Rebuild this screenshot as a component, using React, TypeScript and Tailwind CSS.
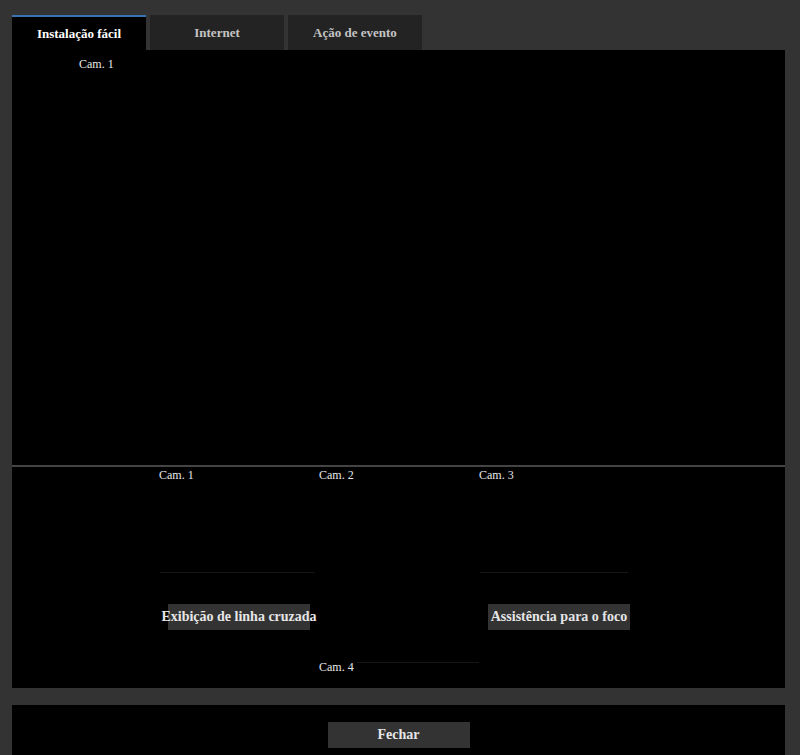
import React from "react";

const serif = { fontFamily: '"Liberation Serif", "Times New Roman", serif' };

const tabs = [
  { label: "Instalação fácil", active: true },
  { label: "Internet", active: false },
  { label: "Ação de evento", active: false },
];

function CamCell({ label, button, line }: { label: string; button?: string; line?: string }) {
  return (
    <div className="flex h-[193px] w-40 flex-col">
      <div className="h-[14px] pt-px text-xs leading-[14px] text-[#e8e8e8]">{label}</div>
      {button && (
        <>
          <div className={`ml-px mt-[91px] h-px bg-[#161616] ${line}`} />
          <div className="mt-[31px] flex justify-center">
            <div className="flex h-[26px] w-[142px] items-center justify-center whitespace-nowrap bg-[#333333] text-sm font-bold text-[#e6e6e6]">
              {button}
            </div>
          </div>
        </>
      )}
    </div>
  );
}

export default function App() {
  return (
    <div className="h-[755px] w-[800px] overflow-hidden bg-[#333333] pl-3 pt-[15px]" style={serif}>
      <div className="flex w-[773px] gap-1">
        {tabs.map((tab) => (
          <div
            key={tab.label}
            className={
              tab.active
                ? "flex h-[35px] w-[134px] items-center justify-center border-t-2 border-[#3a74b0] bg-black text-[13px] font-bold text-white"
                : "flex h-[35px] w-[134px] items-center justify-center bg-[#232323] pt-[1px] text-[13px] font-bold text-[#c4c4c4]"
            }
          >
            {tab.label}
          </div>
        ))}
      </div>

      <div className="w-[773px] bg-black">
        <div className="h-[415px] pl-[67px] pt-[7px]">
          <div className="text-xs leading-[14px] text-[#e8e8e8]">Cam. 1</div>
        </div>
        <div className="h-[2px] bg-[#444444]" />
        <div className="h-[221px] pl-[147px]">
          <div className="flex">
            <CamCell label="Cam. 1" button="Exibição de linha cruzada" line="w-[155px]" />
            <CamCell label="Cam. 2" />
            <CamCell label="Cam. 3" button="Assistência para o foco" line="w-[148px]" />
          </div>
          <div className="ml-40 flex w-40 items-start">
            <div className="text-xs leading-[14px] text-[#e8e8e8]">Cam. 4</div>
            <div className="ml-[3px] mt-[2px] h-px flex-1 bg-[#161616]" />
          </div>
        </div>
      </div>

      <div className="mt-[17px] flex h-[60px] w-[773px] justify-center bg-black pt-[17px]">
        <div className="flex h-[26px] w-[142px] items-center justify-center bg-[#333333] text-sm font-bold text-[#e6e6e6]">
          Fechar
        </div>
      </div>
    </div>
  );
}
